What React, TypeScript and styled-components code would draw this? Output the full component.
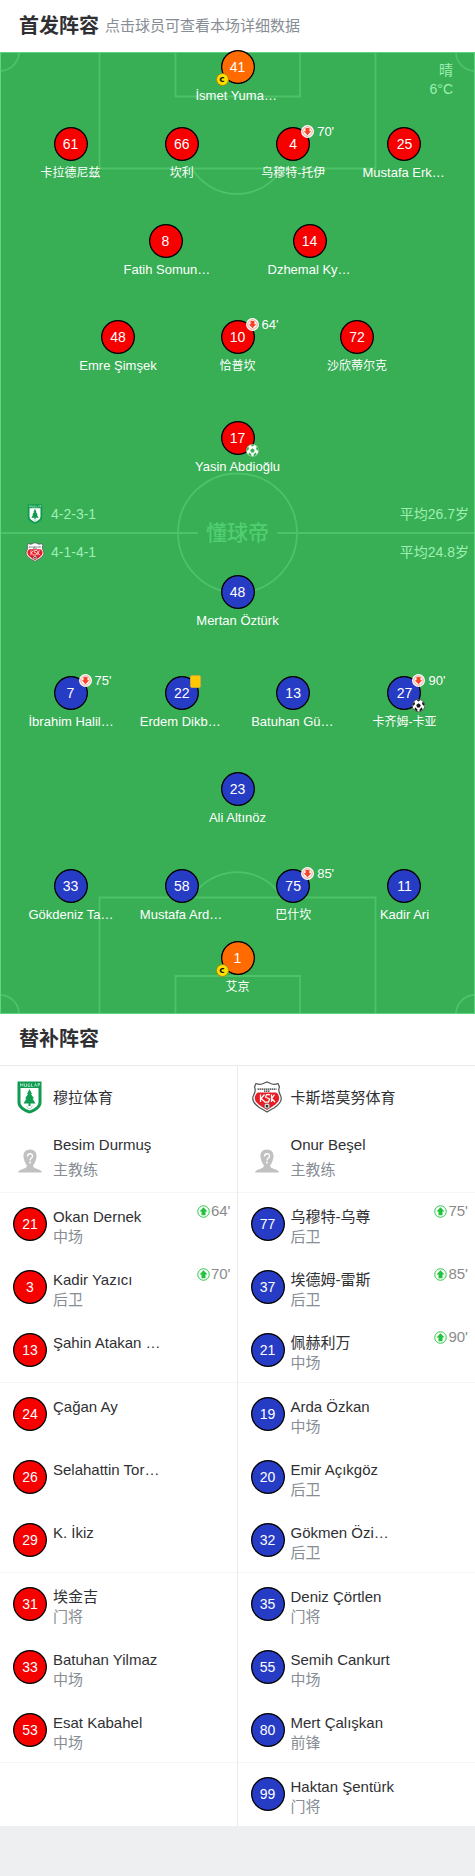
import React from 'react';
import styled, { createGlobalStyle } from 'styled-components';

const GlobalStyle = createGlobalStyle`
  *, *::before, *::after { box-sizing: border-box; }
  body {
    margin: 0;
    background: #eeeff1;
    color: #2f3033;
    font-family: "Liberation Sans", "Noto Sans CJK SC", sans-serif;
  }
  a { color: inherit; text-decoration: none; }
  h2, h3, p, ul { margin: 0; padding: 0; }
  ul { list-style: none; }
`;

const RED = '#f60000';
const BLUE = '#263cc4';
const ORANGE = '#ff6b00';

const Page = styled.main`
  width: 100%;
`;

const SectionHeader = styled.header<{ $height: number }>`
  display: flex;
  align-items: center;
  gap: 6px;
  height: ${(p) => p.$height}px;
  padding: 0 19px 1px;
  background: #fff;
`;

const SectionTitle = styled.h2`
  font-size: 20px;
  line-height: 28px;
  font-weight: 700;
`;

const Hint = styled.p`
  font-size: 15px;
  line-height: 28px;
  color: #878d94;
`;

const Pitch = styled.section`
  position: relative;
  display: flow-root;
  background: #38ae55;
  color: #fff;
`;

const Markings = styled.svg`
  position: absolute;
  inset: 0;
  width: 100%;
  height: 100%;
`;

const Weather = styled.div`
  position: absolute;
  top: 9px;
  right: 22px;
  text-align: right;
  font-size: 14px;
  line-height: 19px;
  color: #9df0b3;
`;

const Half = styled.div<{ $rows: string }>`
  position: relative;
  display: grid;
  grid-template-rows: ${(p) => p.$rows};
`;

const HomeHalf = styled(Half)`
  margin-top: -2px;
`;

const sidePadding: Record<number, string> = { 1: '0', 2: '26%', 3: '16%', 4: '6%' };

const Line = styled.div<{ $count: number }>`
  display: flex;
  align-items: flex-start;
  justify-content: ${(p) => (p.$count === 1 ? 'center' : 'space-between')};
  padding: 0 ${(p) => sidePadding[p.$count]};
`;

const PlayerLink = styled.a`
  display: flex;
  flex-direction: column;
  align-items: center;
  width: 84px;
`;

const Shirt = styled.span<{ $color: string }>`
  position: relative;
  display: flex;
  flex: none;
  align-items: center;
  justify-content: center;
  width: 34px;
  height: 34px;
  border-radius: 50%;
  background: radial-gradient(circle closest-side, ${(p) => p.$color} 90%, #000 94%);
  color: #fff;
  font-size: 14px;
  line-height: 16px;
`;

const PlayerName = styled.span<{ $latin: boolean; $cut: boolean }>`
  align-self: ${(p) => (p.$cut ? 'flex-start' : 'center')};
  font-size: ${(p) => (p.$latin ? 13 : 12)}px;
  line-height: 24px;
  white-space: nowrap;
`;

const TopMark = styled.span`
  position: absolute;
  top: -2px;
  left: 25px;
  display: flex;
  align-items: center;
  gap: 3px;
  font-size: 13px;
  line-height: 13px;
`;

const Card = styled.span`
  position: absolute;
  top: -1px;
  left: 25px;
  width: 11px;
  height: 13px;
  border: 1px solid #c9a93a;
  border-radius: 2px;
  background: #ffc800;
`;

const BallMark = styled.span`
  position: absolute;
  right: -4px;
  bottom: -2px;
  display: flex;
`;

const Captain = styled.span`
  position: absolute;
  left: -5px;
  bottom: -2px;
  width: 13px;
  height: 13px;
  border: 1px solid #a08a10;
  border-radius: 50%;
  background: #ffde00;
  color: #111;
  font: 700 9px/10px "DejaVu Sans", sans-serif;
  text-align: center;
`;

const Middle = styled.div`
  position: relative;
  display: flex;
  justify-content: space-between;
  height: 96px;
  padding: 16px 6px 4px 25px;
  color: #9df0b3;
  font-size: 14px;
  line-height: 38px;
`;

const MiddleSide = styled.div<{ $end?: boolean }>`
  flex: 1 1 0;
  text-align: ${(p) => (p.$end ? 'right' : 'left')};
`;

const Formation = styled.div`
  display: flex;
  align-items: center;
  gap: 6px;
  height: 38px;
`;

const Brand = styled.div`
  margin-right: 19px;
  color: #51ce70;
  font: 500 21px/72px "Noto Sans CJK SC", sans-serif;
`;

const Bench = styled.section`
  display: grid;
  grid-template-columns: 1fr 1fr;
  border-top: 1px solid #ebebed;
  background: #fff;
`;

const BenchColumn = styled.div`
  min-width: 0;
  & + & { box-shadow: -1px 0 #ebebed; }
`;

const TeamHead = styled.div`
  height: 127px;
  padding: 14px 13px 0;
  border-bottom: 1px solid #f5f5f7;
`;

const IconSlot = styled.span`
  display: flex;
  flex: none;
  align-items: center;
  justify-content: center;
  width: 33px;
`;

const TeamTitle = styled.a`
  display: flex;
  align-items: center;
  gap: 7px;
  height: 34px;
`;

const TeamName = styled.h3`
  padding-top: 2px;
  font-size: 15px;
  line-height: 20px;
  font-weight: 400;
`;

const Coach = styled.div`
  display: flex;
  align-items: flex-end;
  gap: 7px;
  margin-top: 18px;
`;

const CoachPhoto = styled(IconSlot)`
  padding-bottom: 9px;
`;

const CoachText = styled.div`
  font-size: 15px;
  line-height: 25px;
`;

const Muted = styled.p`
  color: #878d94;
`;

const BenchItem = styled.li<{ $ruled: boolean }>`
  border-bottom: ${(p) => (p.$ruled ? '1px solid #f5f5f7' : '0')};
`;

const BenchLink = styled.a`
  display: flex;
  align-items: center;
  gap: 6px;
  height: 63px;
  padding: 0 7px 1px 13px;
`;

const BenchText = styled.span`
  align-self: flex-start;
  display: flex;
  flex-direction: column;
  padding-top: 14px;
  font-size: 15px;
  line-height: 20px;
  white-space: nowrap;
`;

const Role = styled.span`
  color: #878d94;
`;

const CameOn = styled.span`
  align-self: flex-start;
  display: flex;
  align-items: center;
  gap: 1px;
  margin-left: auto;
  padding-top: 8px;
  color: #8b8b8b;
  font-size: 15px;
  line-height: 20px;
`;

function SubIcon({ direction }: { direction: 'up' | 'down' }) {
  if (direction === 'down') {
    return (
      <svg width="13" height="13" viewBox="0 0 26 26" aria-hidden="true">
        <circle cx="13" cy="13" r="13" fill="#fff" />
        <circle cx="13" cy="13" r="9.5" fill="none" stroke="#ee7a68" strokeWidth="1.5" />
        <path d="M9 6h8v6.500h3.500L13 20.500 5.500 12.500H9z" fill="#fb4326" />
      </svg>
    );
  }
  return (
    <svg width="13" height="13" viewBox="0 0 26 26" aria-hidden="true">
      <circle cx="13" cy="13" r="11.500" fill="#fff" stroke="#2fc64c" strokeWidth="2" />
      <path d="M13 4.500 21 13h-4v7.500H9V13H5z" fill="#20c33c" />
    </svg>
  );
}

function Ball({ color }: { color: string }) {
  return (
    <svg width="13" height="13" viewBox="0 0 26 26" aria-hidden="true">
      <circle cx="13" cy="13" r="12.500" fill="#fff" stroke={color} />
      <path
        fill={color}
        d="M13 8.500l4.500 3.300-1.700 5.200h-5.600l-1.700-5.200zM8.500 1.500h9L13 5zM1 10.500l3.500-6 1.500 5.500-4 4zM25 10.500l-3.500-6L20 10l4 4zM5 21.500l1-5 5 4.500-.5 4zM21 21.500l-1-5-5 4.500.5 4z"
      />
    </svg>
  );
}

function MuglaCrest({ width, height }: { width: number; height: number }) {
  return (
    <svg width={width} height={height} viewBox="0 0 50 66" aria-hidden="true">
      <path d="M1 1h48v42c0 11-11 18-24 22C12 61 1 54 1 43z" fill="#0f9b50" />
      <path d="M7 14h36v28c0 8-8 13-18 17C15 55 7 50 7 42z" fill="#fff" />
      <path
        d="M7 11V5l2.500 4L12 5v6M15 5v6h4V5M26 6h-4v5h4V8M29 5v6h3M35 11l2-6 2 6M42 11V5h3v3h-3"
        fill="none"
        stroke="#d5f3e0"
        strokeWidth="1.300"
      />
      <path d="M25 16l5 10h-2l6 9h-3l6 10H27v5h-4v-5H13l6-10h-3l6-9h-2z" fill="#0f9b50" />
      <path d="M20 50c0 7 10 7 10 0" fill="none" stroke="#8ac9a3" strokeWidth="1.500" />
    </svg>
  );
}

function KastamonuCrest({ width, height }: { width: number; height: number }) {
  return (
    <svg width={width} height={height} viewBox="0 0 60 64" aria-hidden="true">
      <path
        d="M8 5c7 3 12 2 17-1l5-2 5 2c5 3 10 4 17 1l3 7c-3 6-2 10 2 17 5 10-4 19-13 25-6 3-11 6-14 8-3-2-8-5-14-8C7 48-2 39 3 29c4-7 5-11 2-17z"
        fill="#fff"
        stroke="#55565a"
        strokeWidth="2.500"
      />
      <path
        d="M13 23h34c3 0 5 3 7 8 2 8-4 14-13 20l-11 7-11-7C10 45 4 39 6 31c2-5 4-8 7-8z"
        fill="#e81c24"
      />
      <path d="M11 16h38M24 20h12" stroke="#333" strokeWidth="2.500" strokeDasharray="3 1" />
      <path
        d="M17 27v15M25 27l-7 8 8 7M36 27h-7l-2 5 8 4-2 6h-8M39 27v15M45 27l-6 8 7 7"
        fill="none"
        stroke="#fff"
        strokeWidth="2.500"
      />
      <circle cx="30" cy="50" r="5.500" fill="#fff" stroke="#444" strokeWidth="1" />
      <path d="M30 47l3 2-1 4h-4l-1-4z" fill="#333" />
    </svg>
  );
}

function UnknownPerson() {
  return (
    <svg width="24" height="24" viewBox="0 0 48 48" aria-hidden="true">
      <path
        d="M24 1c9 0 14 6 13 15-1 8-4 13-7 17 1 4 3 5 8 7 5 1 9 3 10 7H0c1-4 5-6 10-7 5-2 7-3 8-7-3-4-6-9-7-17C10 7 15 1 24 1z"
        fill="#c1c1c1"
      />
      <path
        d="M19 15c0-7 10-7 10-1 0 5-5 4-5 9"
        fill="none"
        stroke="#fff"
        strokeWidth="2.800"
      />
      <circle cx="24" cy="27" r="1.900" fill="#fff" />
    </svg>
  );
}

function PitchMarkings() {
  return (
    <Markings viewBox="0 0 475 962" preserveAspectRatio="none" aria-hidden="true">
      <g fill="none" stroke="#4dc269" strokeWidth="1.800">
        <path d="M99.500 0v116.500h276V0M175.500 0v44.500h124.500V0" />
        <path d="M192 116.500a52.500 52.500 0 0 0 90 0" />
        <path d="M99.500 962V845.500h276V962M175.500 962v-38h124.500v38" />
        <path d="M192 845.500a52.500 52.500 0 0 1 90 0" />
        <circle cx="237.500" cy="481" r="59.500" />
        <path d="M0 481h198M277 481h198" />
        <path d="M19 0a19 19 0 0 1-19 19M456 0a19 19 0 0 0 19 19M0 943a19 19 0 0 1 19 19M475 943a19 19 0 0 0-19 19" />
      </g>
      <rect x="0.500" y="0.500" width="474" height="961" fill="none" stroke="#5ed580" />
    </Markings>
  );
}

interface PlayerData {
  no: number;
  name: string;
  off?: string;
  card?: boolean;
  ball?: string;
  captain?: boolean;
}

const home: PlayerData[][] = [
  [{ no: 41, name: 'İsmet Yuma…', captain: true }],
  [
    { no: 61, name: '卡拉德尼兹' },
    { no: 66, name: '坎利' },
    { no: 4, name: '乌穆特-托伊', off: "70'" },
    { no: 25, name: 'Mustafa Erk…' },
  ],
  [
    { no: 8, name: 'Fatih Somun…' },
    { no: 14, name: 'Dzhemal Ky…' },
  ],
  [
    { no: 48, name: 'Emre Şimşek' },
    { no: 10, name: '恰普坎', off: "64'" },
    { no: 72, name: '沙欣蒂尔克' },
  ],
  [{ no: 17, name: 'Yasin Abdioğlu', ball: '#38ae55' }],
];

const away: PlayerData[][] = [
  [{ no: 48, name: 'Mertan Öztürk' }],
  [
    { no: 7, name: 'İbrahim Halil…', off: "75'" },
    { no: 22, name: 'Erdem Dikb…', card: true },
    { no: 13, name: 'Batuhan Gü…' },
    { no: 27, name: '卡齐姆-卡亚', off: "90'", ball: '#151515' },
  ],
  [{ no: 23, name: 'Ali Altınöz' }],
  [
    { no: 33, name: 'Gökdeniz Ta…' },
    { no: 58, name: 'Mustafa Ard…' },
    { no: 75, name: '巴什坎', off: "85'" },
    { no: 11, name: 'Kadir Ari' },
  ],
  [{ no: 1, name: '艾京', captain: true }],
];

function Player({ data, color }: { data: PlayerData; color: string }) {
  const latin = !/[\u4e00-\u9fff]/.test(data.name);
  return (
    <PlayerLink href="#player">
      <Shirt $color={data.captain ? ORANGE : color}>
        {data.no}
        {data.off && (
          <TopMark>
            <SubIcon direction="down" />
            {data.off}
          </TopMark>
        )}
        {data.card && <Card />}
        {data.ball && (
          <BallMark>
            <Ball color={data.ball} />
          </BallMark>
        )}
        {data.captain && <Captain>c</Captain>}
      </Shirt>
      <PlayerName $latin={latin} $cut={data.name.endsWith('…')}>
        {data.name}
      </PlayerName>
    </PlayerLink>
  );
}

function Lines({ lines, color }: { lines: PlayerData[][]; color: string }) {
  return (
    <>
      {lines.map((line, i) => (
        <Line key={i} $count={line.length}>
          {line.map((p) => (
            <Player key={p.no} data={p} color={color} />
          ))}
        </Line>
      ))}
    </>
  );
}

interface Substitute {
  no: number;
  name: string;
  role?: string;
  on?: string;
}

const homeBench: Substitute[] = [
  { no: 21, name: 'Okan Dernek', role: '中场', on: "64'" },
  { no: 3, name: 'Kadir Yazıcı', role: '后卫', on: "70'" },
  { no: 13, name: 'Şahin Atakan …' },
  { no: 24, name: 'Çağan Ay' },
  { no: 26, name: 'Selahattin Tor…' },
  { no: 29, name: 'K. İkiz' },
  { no: 31, name: '埃金吉', role: '门将' },
  { no: 33, name: 'Batuhan Yilmaz', role: '中场' },
  { no: 53, name: 'Esat Kabahel', role: '中场' },
];

const awayBench: Substitute[] = [
  { no: 77, name: '乌穆特-乌尊', role: '后卫', on: "75'" },
  { no: 37, name: '埃德姆-雷斯', role: '后卫', on: "85'" },
  { no: 21, name: '佩赫利万', role: '中场', on: "90'" },
  { no: 19, name: 'Arda Özkan', role: '中场' },
  { no: 20, name: 'Emir Açıkgöz', role: '后卫' },
  { no: 32, name: 'Gökmen Özi…', role: '后卫' },
  { no: 35, name: 'Deniz Çörtlen', role: '门将' },
  { no: 55, name: 'Semih Cankurt', role: '中场' },
  { no: 80, name: 'Mert Çalışkan', role: '前锋' },
  { no: 99, name: 'Haktan Şentürk', role: '门将' },
];

interface TeamBenchProps {
  crest: React.ReactNode;
  team: string;
  coach: string;
  color: string;
  players: Substitute[];
}

function TeamBench({ crest, team, coach, color, players }: TeamBenchProps) {
  return (
    <BenchColumn>
      <TeamHead>
        <TeamTitle href="#team">
          <IconSlot>{crest}</IconSlot>
          <TeamName>{team}</TeamName>
        </TeamTitle>
        <Coach>
          <CoachPhoto>
            <UnknownPerson />
          </CoachPhoto>
          <CoachText>
            <p>{coach}</p>
            <Muted>主教练</Muted>
          </CoachText>
        </Coach>
      </TeamHead>
      <ul>
        {players.map((p, i) => (
          <BenchItem key={p.no} $ruled={i % 3 === 2}>
            <BenchLink href="#player">
              <Shirt $color={color}>{p.no}</Shirt>
              <BenchText>
                <span>{p.name}</span>
                {p.role && <Role>{p.role}</Role>}
              </BenchText>
              {p.on && (
                <CameOn>
                  <SubIcon direction="up" />
                  {p.on}
                </CameOn>
              )}
            </BenchLink>
          </BenchItem>
        ))}
      </ul>
    </BenchColumn>
  );
}

export default function App() {
  return (
    <Page>
      <GlobalStyle />
      <SectionHeader $height={52}>
        <SectionTitle>首发阵容</SectionTitle>
        <Hint>点击球员可查看本场详细数据</Hint>
      </SectionHeader>
      <Pitch>
        <PitchMarkings />
        <Weather>
          <div>晴</div>
          <div>6°C</div>
        </Weather>
        <HomeHalf $rows="77px 97px 96px 101px 58px">
          <Lines lines={home} color={RED} />
        </HomeHalf>
        <Middle>
          <MiddleSide>
            <Formation>
              <MuglaCrest width={20} height={20} />
              4-2-3-1
            </Formation>
            <Formation>
              <KastamonuCrest width={20} height={20} />
              4-1-4-1
            </Formation>
          </MiddleSide>
          <Brand>懂球帝</Brand>
          <MiddleSide $end>
            <div>平均26.7岁</div>
            <div>平均24.8岁</div>
          </MiddleSide>
        </Middle>
        <Half $rows="101px 96px 97px 72px 73px">
          <Lines lines={away} color={BLUE} />
        </Half>
      </Pitch>
      <SectionHeader $height={51}>
        <SectionTitle>替补阵容</SectionTitle>
      </SectionHeader>
      <Bench>
        <TeamBench
          crest={<MuglaCrest width={25} height={33} />}
          team="穆拉体育"
          coach="Besim Durmuş"
          color={RED}
          players={homeBench}
        />
        <TeamBench
          crest={<KastamonuCrest width={30} height={32} />}
          team="卡斯塔莫努体育"
          coach="Onur Beşel"
          color={BLUE}
          players={awayBench}
        />
      </Bench>
    </Page>
  );
}
